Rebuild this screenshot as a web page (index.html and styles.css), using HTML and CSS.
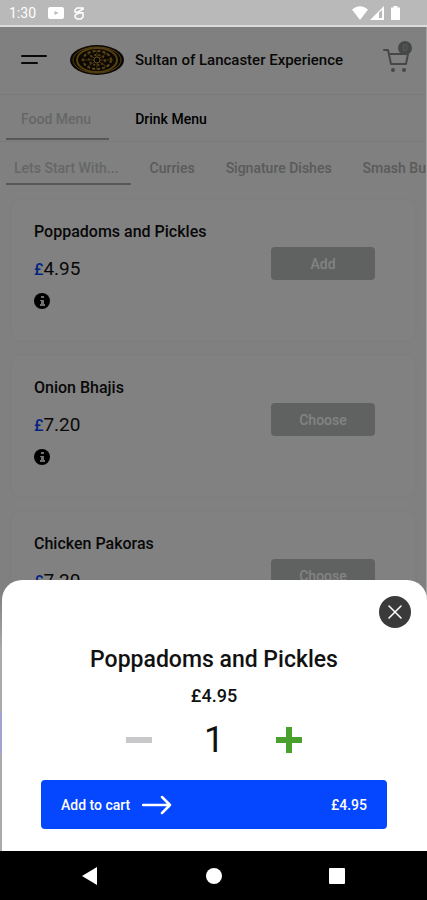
FILE: index.html
```
<!DOCTYPE html>
<html lang="en">
<head>
  <meta charset="UTF-8" />
  <meta name="viewport" content="width=device-width, initial-scale=1.0" />
  <title>Sultan of Lancaster Experience</title>
  <link rel="stylesheet" href="styles.css">
</head>
<body>
  <div class="status-bar">
    <span class="clock">1:30</span>
    <svg class="status-video" width="16" height="12" viewBox="0 0 16 12"><rect width="16" height="12" rx="2" fill="#fff"/><path d="M6.500 4v4l4-2z" fill="#b9b9b9"/></svg>
    <svg width="10" height="14" viewBox="0 0 10 14" fill="none" stroke="#fff" stroke-width="1.500"><path d="M9 4V2H3L1 4v2l8 1v4l-2 2H3l-2-2V9M4 6l5-3M1 9l4-2"/></svg>
    <div class="status-right">
      <svg width="16" height="14" viewBox="0 0 16 14" fill="#fff"><path d="M0 3.500Q8-3 16 3.500L8 14z"/></svg>
      <svg width="14" height="14" viewBox="0 0 14 14"><path d="M0 14 14 0v14z" fill="#fff"/><path d="M9 6.500 12 4v8H9z" fill="#b9b9b9"/></svg>
      <svg class="battery" width="9" height="14" viewBox="0 0 9 14" fill="#fff"><path d="M2.500 0h4v1.500H9V14H0V1.500h2.500z"/></svg>
    </div>
  </div>

  <div class="screen">
    <div class="page">
      <header class="header">
        <button class="icon-btn" aria-label="Menu">
          <svg width="27" height="12" viewBox="0 0 27 12" stroke="#111" stroke-width="2" stroke-linecap="round"><path d="M1 2h24M1 9h15"/></svg>
        </button>
        <svg class="logo" width="54" height="30" viewBox="0 0 54 30" fill="none">
          <ellipse cx="27" cy="15" rx="27" ry="15" fill="#16100a"/>
          <ellipse cx="27" cy="15" rx="24" ry="13" stroke="#a87d1d" stroke-width="1"/>
          <ellipse cx="27" cy="15" rx="20" ry="12" stroke="#a87d1d" stroke-width="2"/>
          <ellipse cx="27" cy="15" rx="14" ry="9" stroke="#b98a24" stroke-width="2" stroke-dasharray="3 2"/>
          <ellipse cx="27" cy="15" rx="8" ry="5" stroke="#b98a24" stroke-width="2" stroke-dasharray="2 2"/>
          <path d="M27 5v20M11 15h32M17 8l20 14M37 8 17 22" stroke="#876317"/>
          <circle cx="27" cy="15" r="3" fill="#16100a" stroke="#c99a35"/>
        </svg>
        <h1>Sultan of Lancaster Experience</h1>
        <button class="icon-btn cart" aria-label="Cart">
          <svg width="26" height="26" viewBox="0 0 26 26" fill="none" stroke="#8a8e8e" stroke-width="2" stroke-linecap="round" stroke-linejoin="round"><path d="M1 3h4l3 14h15l2-10H6"/><circle cx="10" cy="23" r="1"/><circle cx="21" cy="23" r="1"/></svg>
          <span class="badge">0</span>
        </button>
      </header>

      <nav class="tabs menus">
        <a href="#food" class="active">Food Menu</a>
        <a href="#drink">Drink Menu</a>
      </nav>
      <nav class="tabs categories">
        <a href="#starters" class="active">Lets Start With...</a>
        <a href="#curries">Curries</a>
        <a href="#signature">Signature Dishes</a>
        <a href="#burgers">Smash Burgers</a>
      </nav>

      <main class="items">
        <article class="card">
          <div class="details">
            <h2>Poppadoms and Pickles</h2>
            <p class="price"><span>£</span>4.95</p>
            <svg class="info" width="16" height="16" viewBox="0 0 16 16"><circle cx="8" cy="8" r="8"/><path d="M7 3h3v2H7zM6 7h4v4h1v2H6v-2h1V8H6z" fill="#ddd"/></svg>
          </div>
          <button class="pick">Add</button>
        </article>
        <article class="card">
          <div class="details">
            <h2>Onion Bhajis</h2>
            <p class="price"><span>£</span>7.20</p>
            <svg class="info" width="16" height="16" viewBox="0 0 16 16"><circle cx="8" cy="8" r="8"/><path d="M7 3h3v2H7zM6 7h4v4h1v2H6v-2h1V8H6z" fill="#ddd"/></svg>
          </div>
          <button class="pick">Choose</button>
        </article>
        <article class="card">
          <div class="details">
            <h2>Chicken Pakoras</h2>
            <p class="price"><span>£</span>7.20</p>
            <svg class="info" width="16" height="16" viewBox="0 0 16 16"><circle cx="8" cy="8" r="8"/><path d="M7 3h3v2H7zM6 7h4v4h1v2H6v-2h1V8H6z" fill="#ddd"/></svg>
          </div>
          <button class="pick">Choose</button>
        </article>
      </main>
    </div>

    <div class="overlay">
      <section class="sheet" role="dialog" aria-labelledby="sheetTitle">
        <button class="close" aria-label="Close">
          <svg width="14" height="14" viewBox="0 0 14 14" stroke="#fff" stroke-width="1.500" stroke-linecap="round"><path d="M1 1l12 12M13 1 1 13"/></svg>
        </button>
        <h2 id="sheetTitle">Poppadoms and Pickles</h2>
        <p class="sheet-price">£4.95</p>
        <div class="quantity">
          <button class="icon-btn" aria-label="Decrease">
            <svg width="26" height="26" viewBox="0 0 26 26" fill="#c8c8ca"><path d="M0 10h26v6H0z"/></svg>
          </button>
          <span class="count">1</span>
          <button class="icon-btn" aria-label="Increase">
            <svg width="26" height="26" viewBox="0 0 26 26" fill="#4aa02c"><path d="M10 0h6v10h10v6H16v10h-6V16H0v-6h10z"/></svg>
          </button>
        </div>
        <button class="add-to-cart">
          <span>Add to cart</span>
          <svg width="30" height="20" viewBox="0 0 30 20" fill="none" stroke="#fff" stroke-width="2.500" stroke-linecap="round" stroke-linejoin="round"><path d="M1 10h27M20 2l8 8-8 8"/></svg>
          <span class="total">£4.95</span>
        </button>
      </section>
    </div>
  </div>

  <div class="nav-bar">
    <button class="icon-btn" aria-label="Back"><svg width="18" height="18" viewBox="0 0 18 18" fill="#fff"><path d="M0 9 15 0v18z"/></svg></button>
    <button class="icon-btn" aria-label="Home"><svg width="18" height="18" viewBox="0 0 18 18" fill="#fff"><circle cx="9" cy="9" r="8"/></svg></button>
    <button class="icon-btn" aria-label="Recent apps"><svg width="18" height="18" viewBox="0 0 18 18" fill="#fff"><rect x="1" y="1" width="16" height="16" rx="1"/></svg></button>
  </div>
</body>
</html>
```
FILE: styles.css
```
:root {
  --text: #111;
  --muted: #c6caca;
  --grey: #b0b2b2;
  --blue: #0546ff;
}
* {
  box-sizing: border-box;
}
body {
  margin: 0;
  height: 100vh;
  display: flex;
  flex-direction: column;
  font-family: Roboto, "Liberation Sans", sans-serif;
  color: var(--text);
  overflow: hidden;
}
h1, h2, p {
  margin: 0;
  font-weight: 500;
}
button {
  font-family: inherit;
  border: none;
  padding: 0;
  cursor: pointer;
}
svg {
  display: block;
}
.icon-btn {
  background: none;
}
/* Status bar */
.status-bar {
  display: flex;
  align-items: center;
  height: 27px;
  padding: 0 27px 0 9px;
  background: #b9b9b9;
  border-bottom: 2px solid #dcdcdc;
  color: #fff;
  flex-shrink: 0;
}
.clock {
  font-size: 14px;
}
.status-video {
  margin: 0 10px 0 12px;
}
.status-right {
  display: flex;
  gap: 2px;
  margin-left: auto;
}
.battery {
  margin-left: 5px;
}
/* Page */
.screen {
  flex: 1;
  min-height: 0;
  position: relative;
  overflow: hidden;
}
.page {
  height: 100%;
  overflow: hidden;
  background: #fbfbfb;
}
.header {
  display: flex;
  align-items: center;
  height: 68px;
  padding: 0 18px 2px 21px;
  border-bottom: 1px solid #f0f0f0;
}
.logo {
  margin: 0 11px 0 22px;
}
.header h1 {
  font-size: 15px;
}
.cart {
  position: relative;
  margin-left: auto;
}
.badge {
  position: absolute;
  top: -6px;
  right: -3px;
  width: 14px;
  height: 14px;
  border-radius: 50%;
  background: #8a8e8e;
  color: #bbb;
  font-size: 9px;
  line-height: 14px;
}
/* Tabs */
.tabs {
  display: flex;
  padding-left: 6px;
  white-space: nowrap;
  overflow: hidden;
}
.tabs a {
  color: var(--grey);
  font-size: 14px;
  font-weight: 500;
  text-decoration: none;
  border-bottom: 2px solid transparent;
}
.tabs a.active {
  color: var(--muted);
  border-color: #a9adad;
}
.menus {
  height: 47px;
  gap: 11px;
  border-bottom: 1px solid #f0f0f0;
}
.menus a {
  height: 45px;
  padding: 0 18px 0 15px;
  line-height: 48px;
}
.menus a:not(.active) {
  color: #000;
}
.categories {
  height: 48px;
  gap: 11px;
}
.categories a {
  height: 43px;
  padding: 0 12px 0 8px;
  line-height: 52px;
  flex-shrink: 0;
}
/* Menu items */
.items {
  display: flex;
  flex-direction: column;
  gap: 16px;
  padding: 10px 12px;
}
.card {
  display: flex;
  align-items: flex-start;
  justify-content: space-between;
  height: 140px;
  padding: 22px 40px 0 22px;
  border-radius: 8px;
  background: #fdfdfd;
  box-shadow: 0 0 4px #f7f7f7;
  flex-shrink: 0;
}
.card h2 {
  font-size: 16px;
  line-height: 20px;
}
.price {
  margin: 16px 0 12px;
  font-size: 19px;
  font-weight: 400;
  line-height: 22px;
}
.price span {
  color: var(--blue);
  font-size: 16px;
  font-weight: 500;
}
.pick {
  width: 104px;
  height: 33px;
  margin-top: 25px;
  border-radius: 4px;
  background: #bcc0c1;
  color: #fff;
  font-size: 14px;
  font-weight: 500;
}
/* Bottom sheet */
.overlay {
  position: absolute;
  inset: 0;
  display: flex;
  align-items: flex-end;
  padding-left: 2px;
  background:
    linear-gradient(#a3a3d0, #a3a3d0) left bottom 97px / 2px 42px no-repeat,
    linear-gradient(rgba(170,170,170,0), #aaa 60px) left bottom / 2px 260px no-repeat,
    linear-gradient(#a4a4a4, #a4a4a4) right / 1px 100% no-repeat,
    rgba(0,0,0,0.49);
}
.sheet {
  display: flex;
  flex-direction: column;
  align-items: center;
  width: 100%;
  padding: 16px 40px 22px 39px;
  border-radius: 20px 20px 0 0;
  background: #fff;
}
.close {
  display: grid;
  place-items: center;
  align-self: flex-end;
  width: 32px;
  height: 32px;
  margin-right: -24px;
  border-radius: 50%;
  background: #3a3a3a;
}
.sheet h2 {
  margin-top: 18px;
  font-size: 23px;
  line-height: 28px;
}
.sheet-price {
  margin-top: 12px;
  font-size: 18px;
  line-height: 20px;
}
.quantity {
  display: flex;
  align-items: center;
  justify-content: space-between;
  width: 176px;
  margin: 14px 0 20px;
}
.count {
  font-size: 36px;
  line-height: 40px;
}
.add-to-cart {
  display: flex;
  align-items: center;
  gap: 12px;
  width: 100%;
  height: 49px;
  padding: 0 20px;
  border-radius: 4px;
  background: var(--blue);
  color: #fff;
  font-size: 14px;
  font-weight: 500;
}
.total {
  margin-left: auto;
}
/* Android navigation */
.nav-bar {
  display: flex;
  align-items: center;
  justify-content: center;
  gap: 105px;
  height: 49px;
  background: #000;
  flex-shrink: 0;
}
```
